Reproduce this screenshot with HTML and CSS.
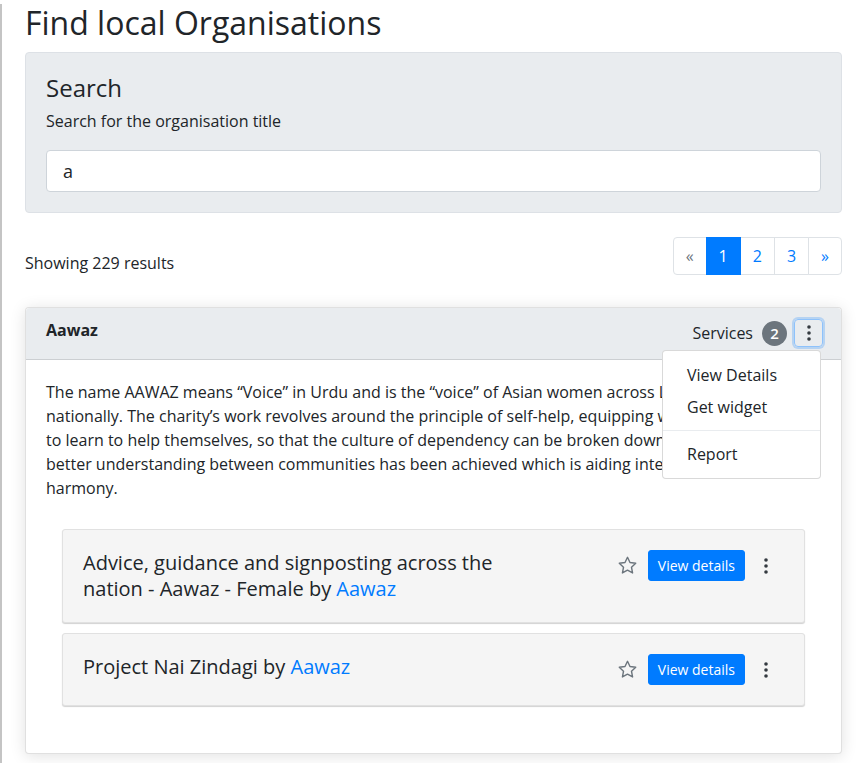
FILE: index.html
```html
<!DOCTYPE html>
<html lang="en">
<head>
<meta charset="utf-8">
<title>Find local Organisations</title>
<link rel="stylesheet" href="styles.css">
</head>
<body>
<div class="page">
  <h1 class="title">Find local Organisations</h1>

  <section class="search-panel">
    <h2 class="search-heading">Search</h2>
    <p class="search-label">Search for the organisation title</p>
    <input class="search-input" type="text" value="a">
  </section>

  <div class="results-bar">
    <span class="results-count">Showing 229 results</span>
    <nav class="pagination">
      <a class="page-link muted">&laquo;</a>
      <a class="page-link active">1</a>
      <a class="page-link">2</a>
      <a class="page-link">3</a>
      <a class="page-link">&raquo;</a>
    </nav>
  </div>

  <article class="org-card">
    <header class="org-header">
      <h3 class="org-name">Aawaz</h3>
      <div class="org-actions">
        <span class="services-label">Services</span>
        <span class="badge">2</span>
        <button class="kebab kebab-focus" type="button">
          <svg width="4" height="16" viewBox="0 0 4 16"><circle cx="2" cy="2" r="1.8"/><circle cx="2" cy="8" r="1.8"/><circle cx="2" cy="14" r="1.8"/></svg>
        </button>
        <div class="dropdown-menu">
          <a class="dropdown-item">View Details</a>
          <a class="dropdown-item">Get widget</a>
          <div class="dropdown-divider"></div>
          <a class="dropdown-item">Report</a>
        </div>
      </div>
    </header>
    <div class="org-body">
      <p class="org-desc">The name AAWAZ means “Voice” in Urdu and is the “voice” of Asian women across Lancashire<br>nationally. The charity’s work revolves around the principle of self-help, equipping women<br>to learn to help themselves, so that the culture of dependency can be broken down and<br>better understanding between communities has been achieved which is aiding inter-faith<br>harmony.</p>

      <div class="services">
        <div class="service">
          <p class="service-title">Advice, guidance and signposting across the nation - Aawaz - Female by <a class="link">Aawaz</a></p>
          <div class="service-actions">
            <svg class="star" width="21" height="21" viewBox="0 0 24 24"><path d="M12 2.6l2.85 6.05 6.55.8-4.85 4.55 1.25 6.55L12 17.35l-5.8 3.2 1.25-6.55L2.6 9.45l6.55-.8z"/></svg>
            <button class="btn-view" type="button">View details</button>
            <button class="kebab" type="button">
              <svg width="4" height="16" viewBox="0 0 4 16"><circle cx="2" cy="2" r="1.8"/><circle cx="2" cy="8" r="1.8"/><circle cx="2" cy="14" r="1.8"/></svg>
            </button>
          </div>
        </div>
        <div class="service">
          <p class="service-title">Project Nai Zindagi by <a class="link">Aawaz</a></p>
          <div class="service-actions">
            <svg class="star" width="21" height="21" viewBox="0 0 24 24"><path d="M12 2.6l2.85 6.05 6.55.8-4.85 4.55 1.25 6.55L12 17.35l-5.8 3.2 1.25-6.55L2.6 9.45l6.55-.8z"/></svg>
            <button class="btn-view" type="button">View details</button>
            <button class="kebab" type="button">
              <svg width="4" height="16" viewBox="0 0 4 16"><circle cx="2" cy="2" r="1.8"/><circle cx="2" cy="8" r="1.8"/><circle cx="2" cy="14" r="1.8"/></svg>
            </button>
          </div>
        </div>
      </div>
    </div>
  </article>
</div>
</body>
</html>
```

FILE: styles.css
```css
* { box-sizing: border-box; }

html, body {
  margin: 0;
  padding: 0;
  overflow: hidden;
}

body {
  font-family: "Open Sans", "Liberation Sans", sans-serif;
  font-size: 16px;
  line-height: 24px;
  color: #212529;
  background: #fff;
}

.page {
  border-left: 2px solid #c4c4c4;
  padding: 0 19px 0 23px;
  min-height: 100vh;
}

.title {
  margin: 4px 0 10px;
  font-size: 32px;
  line-height: 38px;
  font-weight: 400;
}

/* Search panel */
.search-panel {
  background: #e9ecef;
  border: 1px solid #dde1e6;
  border-radius: 4px;
  padding: 20px;
}

.search-heading {
  margin: 0 0 7px;
  font-size: 24px;
  line-height: 29px;
  font-weight: 400;
}

.search-label {
  margin: 0 0 17px;
}

.search-input {
  display: block;
  width: 100%;
  height: 42px;
  padding: 0 16px;
  font-family: inherit;
  font-size: 18px;
  color: #212529;
  background: #fff;
  border: 1px solid #ced4da;
  border-radius: 4px;
}

/* Results bar */
.results-bar {
  margin-top: 24px;
  display: flex;
  justify-content: space-between;
  align-items: flex-end;
}

.pagination {
  display: flex;
}

.page-link {
  display: block;
  padding: 8px 12px;
  line-height: 20px;
  border: 1px solid #dee2e6;
  margin-left: -1px;
  color: #007bff;
  background: #fff;
}

.page-link:first-child {
  margin-left: 0;
  border-radius: 4px 0 0 4px;
}

.page-link:last-child {
  border-radius: 0 4px 4px 0;
}

.page-link.muted { color: #6c757d; }

.page-link.active {
  background: #007bff;
  border-color: #007bff;
  color: #fff;
  position: relative;
}

/* Organisation card */
.org-card {
  margin-top: 32px;
  background: #fff;
  border: 1px solid rgba(0, 0, 0, 0.12);
  border-radius: 4px;
  box-shadow: 0 2px 16px rgba(0, 0, 0, 0.12);
}

.org-header {
  display: flex;
  justify-content: space-between;
  align-items: flex-start;
  padding: 11px 18px 12px 20px;
  background: #e9ecef;
  border-bottom: 1px solid rgba(0, 0, 0, 0.12);
  border-radius: 4px 4px 0 0;
}

.org-name {
  margin: 0;
  font-size: 16px;
  line-height: 22px;
  font-weight: 700;
}

.org-actions {
  position: relative;
  display: flex;
  align-items: center;
}

.services-label {
  margin-right: 9px;
}

.badge {
  width: 25px;
  height: 25px;
  border-radius: 50%;
  background: #6c757d;
  color: #fff;
  font-size: 15px;
  font-weight: 600;
  line-height: 25px;
  text-align: center;
  margin-right: 7px;
}

.kebab {
  display: flex;
  align-items: center;
  justify-content: center;
  width: 28px;
  height: 30px;
  padding: 0;
  border: 0;
  background: transparent;
  fill: #343a40;
}

.kebab-focus {
  width: 29px;
  height: 28px;
  border: 1px solid #8ec2fb;
  border-radius: 4px;
  box-shadow: 0 0 0 2px rgba(0, 123, 255, 0.22);
}

.dropdown-menu {
  position: absolute;
  top: 31px;
  right: 2px;
  width: 159px;
  padding: 8px 0;
  background: #fff;
  border: 1px solid rgba(0, 0, 0, 0.15);
  border-radius: 4px;
  z-index: 10;
}

.dropdown-item {
  display: block;
  padding: 4px 24px;
  line-height: 24px;
  color: #212529;
  white-space: nowrap;
}

.dropdown-divider {
  height: 0;
  margin: 7px 0;
  border-top: 1px solid #e9ecef;
}

.org-body {
  padding: 20px;
}

.org-desc {
  margin: 0;
}

.services {
  margin: 29px 16px 0;
  padding-bottom: 27px;
}

.service {
  display: flex;
  justify-content: space-between;
  align-items: flex-start;
  padding: 20px 24px 20px 20px;
  background: #f5f5f5;
  border: 1px solid #e1e1e1;
  border-radius: 3px;
  box-shadow: 0 1px 1px rgba(0, 0, 0, 0.18);
}

.service + .service {
  margin-top: 10px;
}

.service-title {
  margin: 0;
  max-width: 470px;
  font-size: 20px;
  line-height: 26px;
}

.link {
  color: #007bff;
}

.service-actions {
  display: flex;
  align-items: center;
}

.star {
  fill: none;
  stroke: #6c757d;
  stroke-width: 1.6;
  stroke-linejoin: round;
  margin-right: 10px;
}

.btn-view {
  height: 31px;
  padding: 0 9px;
  font-family: inherit;
  font-size: 14px;
  line-height: 29px;
  color: #fff;
  background: #007bff;
  border: 1px solid #007bff;
  border-radius: 3px;
  margin-right: 7px;
}
```
